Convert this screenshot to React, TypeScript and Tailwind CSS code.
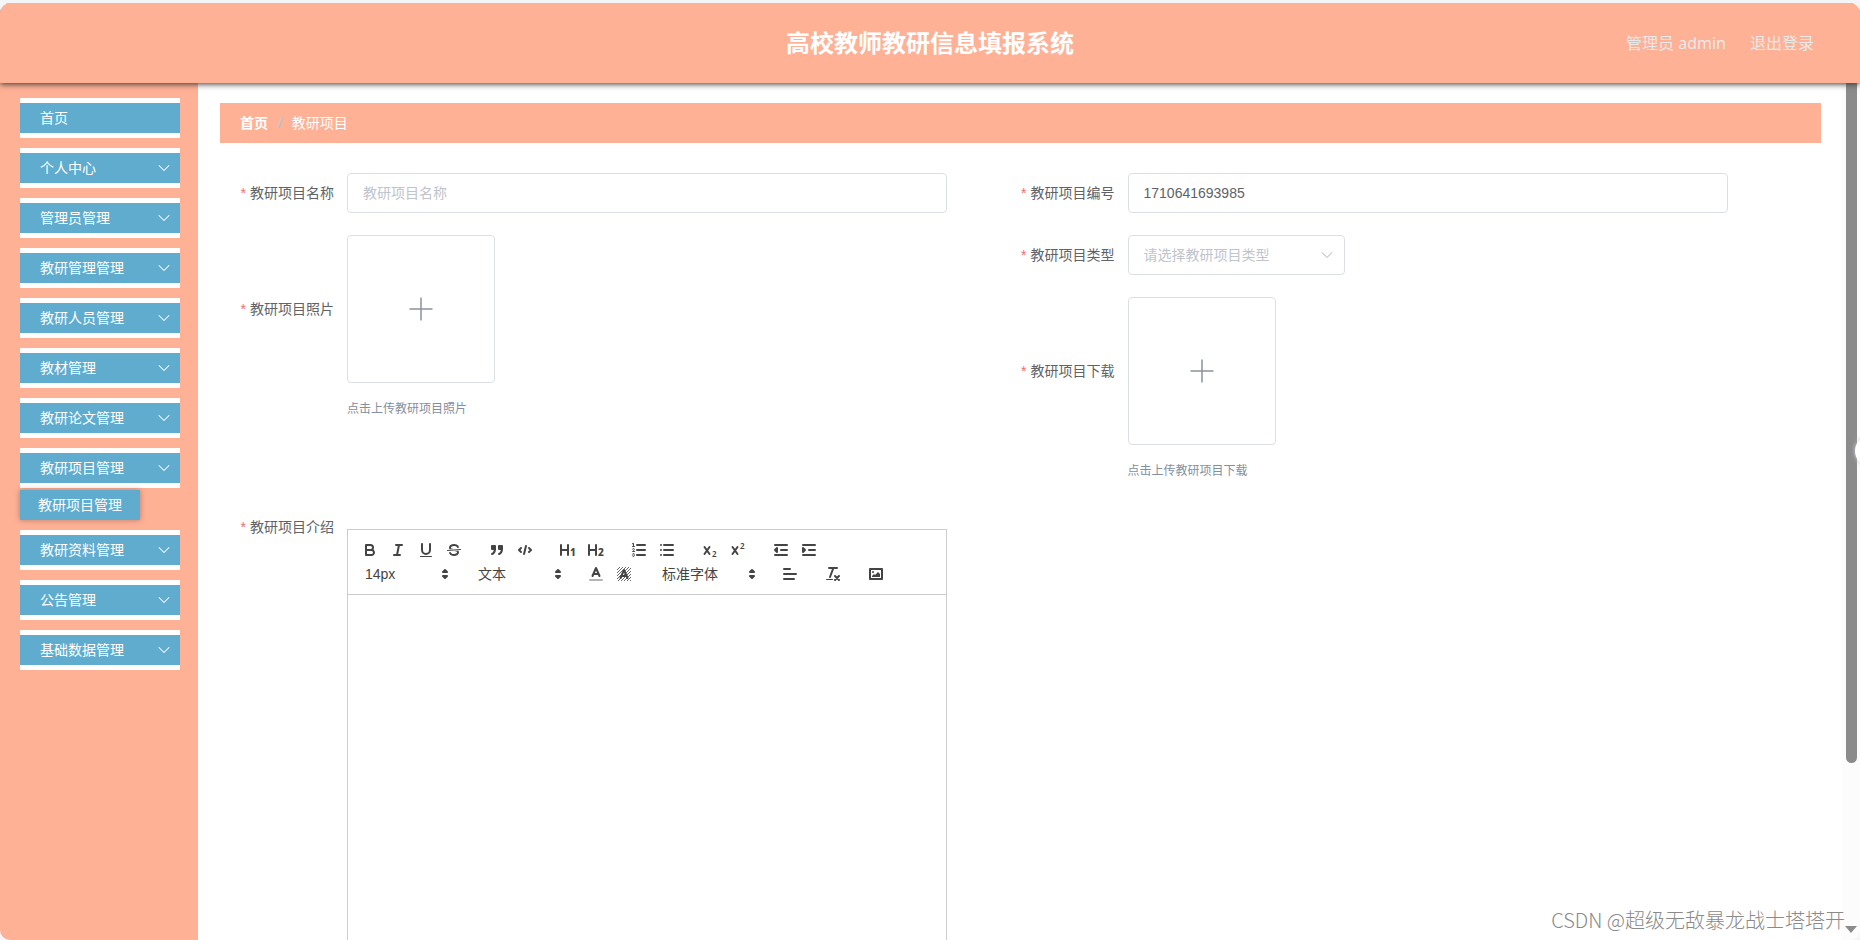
import { useState } from "react"
import type { ReactNode } from "react"
import { ChevronDown } from "lucide-react"
import clsx from "clsx"

interface MenuItem {
  label: string
  children?: string[]
}

const menu: MenuItem[] = [
  { label: "首页" },
  { label: "个人中心", children: [] },
  { label: "管理员管理", children: [] },
  { label: "教研管理管理", children: [] },
  { label: "教研人员管理", children: [] },
  { label: "教材管理", children: [] },
  { label: "教研论文管理", children: [] },
  { label: "教研项目管理", children: ["教研项目管理"] },
  { label: "教研资料管理", children: [] },
  { label: "公告管理", children: [] },
  { label: "基础数据管理", children: [] },
]

function Header() {
  return (
    <header className="relative z-10 grid h-20 shrink-0 grid-cols-[1fr_auto_1fr] items-center bg-[#ffb196] px-[46px] shadow-[0_1px_6px_#333]">
      <span />
      <h1 className="text-2xl font-bold text-white">高校教师教研信息填报系统</h1>
      <div className="flex justify-end gap-6 text-base text-[#e9e9e9]">
        <span>管理员 admin</span>
        <button type="button">退出登录</button>
      </div>
    </header>
  )
}

function Sidebar() {
  return (
    <nav className="w-[198px] shrink-0 bg-[#ffb196] px-5 pt-[15px] text-sm text-white">
      <ul>
        {menu.map((item) => (
          <li key={item.label} className="mb-2.5 w-40">
            <button
              type="button"
              className="flex h-10 w-full items-center justify-between border-y-5 border-white bg-[#5facce] pl-5 pr-1.5">
              {item.label}
              {item.children && <ChevronDown size={20} strokeWidth={1.25} />}
            </button>
            {item.children?.map((child) => (
              <a
                key={child}
                href="#"
                className="mt-0.5 block h-[30px] w-[120px] bg-[#5facce] pl-[18px] leading-[30px] shadow-[0_0_6px_rgba(0,0,0,0.3)]">
                {child}
              </a>
            ))}
          </li>
        ))}
      </ul>
    </nav>
  )
}

interface FieldProps {
  label: string
  htmlFor: string
  tip?: string
  alignTop?: boolean
  children: ReactNode
}

function Field({ label, htmlFor, tip, alignTop, children }: FieldProps) {
  return (
    <div>
      <div className={clsx("flex", alignTop ? "items-start" : "items-center")}>
        <label
          htmlFor={htmlFor}
          className="w-[107px] shrink-0 pr-[13px] text-right text-sm leading-10 text-[#606266]">
          <span className="mr-1 font-['Liberation_Sans',sans-serif] text-[#f56c6c]">*</span>
          {label}
        </label>
        {children}
      </div>
      {tip && (
        <p className="ml-[107px] mt-4 text-xs leading-5 text-[#838fa1]">{tip}</p>
      )}
    </div>
  )
}

const inputClass =
  "h-10 w-full max-w-[600px] rounded border border-[#dcdfe6] bg-white px-[15px] font-['Liberation_Sans','Noto_Sans_CJK_SC',sans-serif] text-sm text-[#606266] placeholder:text-[#c0c4cc]"

function Upload({ id }: { id: string }) {
  return (
    <button
      type="button"
      id={id}
      className="flex size-[148px] items-center justify-center rounded border border-[#dcdfe6]">
      <svg width="24" height="24" viewBox="0 0 24 24" stroke="#8c939d" strokeWidth="1.5">
        <path d="M12 0.5v23M0.5 12h23" />
      </svg>
    </button>
  )
}

const thin = { strokeWidth: 1 }
const filled = { fill: "#444", stroke: "none" }
const solid = { fill: "#444" }
const digit = {
  fill: "#444",
  stroke: "none",
  fontFamily: "Noto Sans, sans-serif",
}

const icons: Record<string, ReactNode> = {
  加粗: (
    <>
      <path d="M5,4H9.5A2.5,2.5,0,0,1,12,6.5v0A2.5,2.5,0,0,1,9.5,9H5V4Z" />
      <path d="M5,9h5.5A2.5,2.5,0,0,1,13,11.5v0A2.5,2.5,0,0,1,10.5,14H5V9Z" />
    </>
  ),
  斜体: <path d="M7,4H13M5,14H11M8,14L10,4" />,
  下划线: (
    <>
      <path d="M5,3V9a4,4,0,0,0,8,0V3" />
      <rect {...filled} x="3" y="15" width="12" height="1" rx="0.5" />
    </>
  ),
  删除线: (
    <>
      <path {...thin} d="M15.5,8.5L2.5,9.5" />
      <path
        {...filled}
        d="M9.007,8C6.542,7.791,6,7.519,6,6.5,6,5.792,7.283,5,9,5c1.571,0,2.765.679,2.969,1.309a1,1,0,0,0,1.9-.617C13.356,4.106,11.354,3,9,3,6.2,3,4,4.538,4,6.5a3.2,3.2,0,0,0,.5,1.843Z"
      />
      <path
        {...filled}
        d="M8.984,10C11.457,10.208,12,10.479,12,11.5c0,0.708-1.283,1.5-3,1.5-1.571,0-2.765-.679-2.969-1.309a1,1,0,1,0-1.9.617C4.644,13.894,6.646,15,9,15c2.8,0,5-1.538,5-3.5a3.2,3.2,0,0,0-.5-1.843Z"
      />
    </>
  ),
  引用: (
    <>
      <rect {...solid} x="4" y="5" width="3" height="3" />
      <rect {...solid} x="11" y="5" width="3" height="3" />
      <path {...solid} d="M7,8c0,4.031-3,5-3,5" />
      <path {...solid} d="M14,8c0,4.031-3,5-3,5" />
    </>
  ),
  代码: <path d="M5,7L3,9L5,11M13,7L15,9L13,11M10,5L8,13" />,
  标题1: (
    <>
      <path d="M2,4V14M9,4V14M2,9H9" />
      <text {...digit} x="11" y="15" fontSize="10" fontWeight="800">1</text>
    </>
  ),
  标题2: (
    <>
      <path d="M2,4V14M9,4V14M2,9H9" />
      <text {...digit} x="11" y="15" fontSize="10" fontWeight="800">2</text>
    </>
  ),
  有序列表: (
    <>
      <path d="M7,4H15M7,9H15M7,14H15" />
      <path
        {...thin}
        d="M2.5,5.5h2M2.3,2.8L3.5,2.3V5.5M4.5,10.5h-2c0-.234,1.85-1.076,1.85-2.234A0.959,0.959,0,0,0,2.5,8.156M2.5,14.846a0.959,0.959,0,0,0,1.85-.109A0.7,0.7,0,0,0,3.75,14a0.688,0.688,0,0,0,.6-0.736,0.959,0.959,0,0,0-1.85-.109"
      />
    </>
  ),
  无序列表: <path d="M6,4H15M6,9H15M6,14H15M3,4H3M3,9H3M3,14H3" />,
  下标: (
    <>
      <path d="M3.5,6L8.5,13M8.5,6L3.5,13" />
      <text {...digit} x="11" y="16" fontSize="8" fontWeight="600">2</text>
    </>
  ),
  上标: (
    <>
      <path d="M3.5,6L8.5,13M8.5,6L3.5,13" />
      <text {...digit} x="11" y="8" fontSize="8" fontWeight="600">2</text>
    </>
  ),
  减少缩进: <path {...solid} d="M3,14H15M3,4H15M9,9H15M5,7V11L3,9Z" />,
  增加缩进: <path {...solid} d="M3,14H15M3,4H15M9,9H15M3,7V11L5,9Z" />,
  文字颜色: (
    <>
      <path opacity="0.4" d="M3,15H15" />
      <path d="M5.5,11L9,3L12.5,11M11.63,9H6.38" />
    </>
  ),
  背景颜色: (
    <>
      <path
        strokeWidth="0.8"
        strokeLinecap="butt"
        d="M2,5L5,2M2,8L8,2M2,11L11,2M2,14L14,2M3,16L16,3M6,16L16,6M9,16L16,9M12,16L16,12M15,16L16,15"
      />
      <path d="M5.5,13L9,5L12.5,13M11.63,11H6.38" />
    </>
  ),
  对齐: <path d="M3,9H15M3,14H13M3,4H9" />,
  清除格式: (
    <>
      <path d="M5,3H13M6,12L9.35,3M11,11L15,15M15,11L11,15" />
      <rect {...filled} x="2" y="14" width="7" height="1" rx="0.5" />
    </>
  ),
  图片: (
    <>
      <rect x="3" y="4" width="12" height="10" />
      <circle {...filled} cx="6" cy="7" r="1" />
      <path {...filled} d="M5,12V11L7,9L8,10L11,7L13,9V12Z" />
    </>
  ),
}

function ToolGroup({ names }: { names: string[] }) {
  return (
    <div className="mr-[15px] flex">
      {names.map((name) => (
        <button
          key={name}
          type="button"
          aria-label={name}
          className="flex h-6 w-7 items-center justify-center">
          <svg
            width="18"
            height="18"
            viewBox="0 0 18 18"
            fill="none"
            stroke="#444"
            strokeWidth="2"
            strokeLinecap="round"
            strokeLinejoin="round">
            {icons[name]}
          </svg>
        </button>
      ))}
    </div>
  )
}

function Picker({ name, value, wide }: { name: string; value: string; wide?: boolean }) {
  return (
    <div
      className={clsx(
        "relative mr-[15px] flex h-6 items-center justify-end",
        wide ? "w-[108px]" : "w-[98px]",
      )}>
      <select
        aria-label={name}
        className="absolute inset-0 appearance-none bg-transparent pl-[9px] font-['Liberation_Sans','Noto_Sans_CJK_SC',sans-serif] text-sm text-[#444]">
        <option>{value}</option>
      </select>
      <svg
        className="pointer-events-none relative"
        width="18"
        height="18"
        viewBox="0 0 18 18"
        fill="#444"
        stroke="#444"
        strokeWidth="2"
        strokeLinejoin="round">
        <path d="M7,11L9,13L11,11ZM7,7L9,5L11,7Z" />
      </svg>
    </div>
  )
}

function Editor({ id }: { id: string }) {
  return (
    <div className="mt-[22px] w-full max-w-[600px] border border-[#ccc]">
      <div className="border-b border-[#ccc] p-2">
        <div className="flex">
          <ToolGroup names={["加粗", "斜体", "下划线", "删除线"]} />
          <ToolGroup names={["引用", "代码"]} />
          <ToolGroup names={["标题1", "标题2"]} />
          <ToolGroup names={["有序列表", "无序列表"]} />
          <ToolGroup names={["下标", "上标"]} />
          <ToolGroup names={["减少缩进", "增加缩进"]} />
        </div>
        <div className="flex">
          <Picker name="字号" value="14px" />
          <Picker name="标题" value="文本" />
          <ToolGroup names={["文字颜色", "背景颜色"]} />
          <Picker name="字体" value="标准字体" wide />
          <ToolGroup names={["对齐"]} />
          <ToolGroup names={["清除格式"]} />
          <ToolGroup names={["图片"]} />
        </div>
      </div>
      <textarea id={id} className="block h-[500px] w-full resize-none px-4 py-3 text-sm outline-none" />
    </div>
  )
}

function ProjectForm() {
  const [name, setName] = useState("")
  const [code, setCode] = useState("1710641693985")

  return (
    <form className="mt-[30px] grid grid-cols-2 px-5">
      <div className="flex flex-col gap-[22px]">
        <Field label="教研项目名称" htmlFor="name">
          <input
            id="name"
            className={inputClass}
            placeholder="教研项目名称"
            value={name}
            onChange={(e) => setName(e.target.value)}
          />
        </Field>
        <Field label="教研项目照片" htmlFor="photo" tip="点击上传教研项目照片">
          <Upload id="photo" />
        </Field>
      </div>
      <div className="flex flex-col gap-[22px]">
        <Field label="教研项目编号" htmlFor="code">
          <input
            id="code"
            className={inputClass}
            value={code}
            onChange={(e) => setCode(e.target.value)}
          />
        </Field>
        <Field label="教研项目类型" htmlFor="type">
          <div className="relative w-[217px]">
            <select id="type" className={clsx(inputClass, "appearance-none text-[#c0c4cc]!")}>
              <option>请选择教研项目类型</option>
            </select>
            <ChevronDown
              size={20}
              strokeWidth={1.25}
              className="pointer-events-none absolute right-2 top-2.5 text-[#c0c4cc]"
            />
          </div>
        </Field>
        <Field label="教研项目下载" htmlFor="file" tip="点击上传教研项目下载">
          <Upload id="file" />
        </Field>
      </div>
      <div className="mt-[26px]">
        <Field label="教研项目介绍" htmlFor="intro" alignTop>
          <Editor id="intro" />
        </Field>
      </div>
    </form>
  )
}

function Scrollbar() {
  return (
    <div
      aria-hidden="true"
      className="relative flex w-[18px] shrink-0 flex-col items-center justify-between bg-[#fcfcfc] pb-[7px]">
      <div className="h-4/5 w-[11px] rounded-b-full bg-[#8b8b8b]" />
      <svg width="12" height="7" viewBox="0 0 12 7" fill="#8b8b8b">
        <path d="M0,0H12L6,7Z" />
      </svg>
      <span className="absolute -right-[27px] top-[352px] size-8 rounded-full bg-white shadow-[0_0_4px_#ccccdd]" />
    </div>
  )
}

export default function App() {
  return (
    <div className="h-screen bg-[#f4f5f6] pt-[3px] font-['Noto_Sans','Noto_Sans_CJK_SC',sans-serif]">
      <div className="relative flex h-full flex-col overflow-hidden rounded-[10px] bg-white">
        <Header />
        <div className="flex min-h-0 flex-1">
          <Sidebar />
          <main className="min-w-0 flex-1 overflow-hidden pl-[22px] pr-[21px] pt-5">
            <div className="flex h-10 items-center bg-[#ffb196] px-5 text-sm text-white">
              <a href="#" className="font-bold">首页</a>
              <span className="mx-[9px] font-bold text-[#c0c4cc]">/</span>
              <span>教研项目</span>
            </div>
            <ProjectForm />
          </main>
          <Scrollbar />
        </div>
        <p className="absolute bottom-1.5 right-[15px] z-20 font-['Noto_Sans_CJK_SC',sans-serif] text-xl font-light text-[#8a8a8a] [text-shadow:1px_1px_0_#fff]">
          CSDN @超级无敌暴龙战士塔塔开
        </p>
      </div>
    </div>
  )
}
